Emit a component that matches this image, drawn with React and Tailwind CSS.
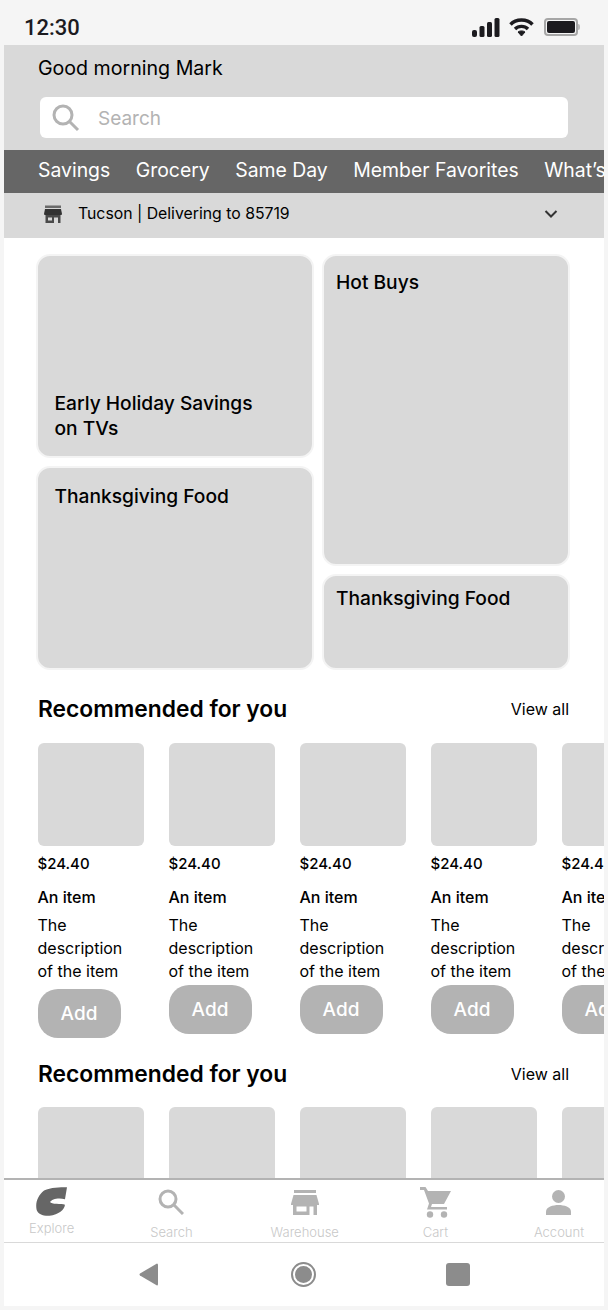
const font = "font-['Inter','Liberation_Sans',sans-serif]";

function StatusBar() {
  return (
    <div className="h-[45px] flex items-center justify-between pl-6 pr-7 pt-[9px] bg-[#f5f5f5]">
      <span className="text-[22px] font-medium text-[#1c1b1f] font-['Roboto',sans-serif]">12:30</span>
      <div className="flex items-center">
        <svg width="28" height="19" viewBox="0 0 28 19" fill="#1c1b1f">
          <rect x="0" y="12" width="5" height="7" rx="2" />
          <rect x="7.5" y="8" width="5" height="11" rx="1.5" />
          <rect x="15" y="4" width="5" height="15" rx="1.5" />
          <rect x="22.5" y="0" width="5" height="19" rx="1.5" />
        </svg>
        <svg className="ml-[9px]" width="25" height="19" viewBox="0 0 25 19" fill="none" stroke="#1c1b1f" strokeWidth="3.4">
          <path d="M1.5 6.5 C7 0.5 18 0.5 23.5 6.5" />
          <path d="M6 11 C9.5 7.5 15.5 7.5 19 11" />
          <path d="M9 14 L12.5 18 L16 14 C14 12.5 11 12.5 9 14Z" fill="#1c1b1f" strokeWidth="1" />
        </svg>
        <div className="flex items-center ml-[10px]">
          <div className="w-[34px] h-[18px] rounded-[4px] border-[2px] border-[#a6a6a6] p-[1px]">
            <div className="w-full h-full rounded-[2px] bg-[#1c1b1f]" />
          </div>
          <div className="w-[2px] h-[6px] bg-[#bbb] rounded-r" />
        </div>
      </div>
    </div>
  );
}

function Header() {
  const tabs = ["Savings", "Grocery", "Same Day", "Member Favorites", "What’s New"];
  return (
    <div>
      <div className="h-[105px] bg-[#d9d9d9] pt-[12px] pl-[34px]">
        <div className="text-[19.6px] leading-[23px] text-black">Good morning Mark</div>
        <div className="mt-[17px] ml-[2px] w-[528px] h-[41px] rounded-[6px] bg-white flex items-center pl-[11px]">
          <svg width="30" height="30" viewBox="0 0 30 30" fill="none" stroke="#b3b3b3" strokeWidth="3">
            <circle cx="12" cy="12" r="9" />
            <path d="M18.5 18.5 L27 27" />
          </svg>
          <span className="ml-[17px] pt-[3px] text-[19px] text-[#b3b3b3]">Search</span>
        </div>
      </div>
      <div className="h-[43px] bg-[#666666] flex items-center gap-[25.5px] pl-[34px] pb-[1px] overflow-hidden whitespace-nowrap">
        {tabs.map((t) => (
          <span key={t} className="text-[19.4px] text-white">{t}</span>
        ))}
      </div>
      <div className="h-[45px] bg-[#d9d9d9] flex items-center pl-[40px] pr-[46px] pb-[3px]">
        <svg width="18" height="18" viewBox="0 0 18 18" fill="#4a4a4a">
          <rect x="1" y="0.5" width="16" height="2.5" fill="#6b6b6b" />
          <path d="M1 4 H17 L18 9 Q18 10 17 10 H1 Q0 10 0 9 Z" fill="#333" />
          <path d="M1.5 10 H16.5 V18 H14 V12.5 H10 V18 H1.5 Z M4 12.5 V15.5 H8 V12.5 Z" fillRule="evenodd" />
        </svg>
        <span className="ml-[16px] text-[15.8px] text-black">Tucson | Delivering to 85719</span>
        <svg className="ml-auto" width="14" height="10" viewBox="0 0 14 10" fill="none" stroke="#333" strokeWidth="2">
          <path d="M1.5 2 L7 7.5 L12.5 2" />
        </svg>
      </div>
    </div>
  );
}

function Tile({ title, className }) {
  return (
    <div className={`rounded-[14px] bg-[#d9d9d9] border-[2px] border-[#f4f4f4] flex ${className}`}>
      <div className="text-[19.2px] leading-[25px] font-medium text-black">{title}</div>
    </div>
  );
}

function Product({ first }) {
  return (
    <div className="w-[106px] shrink-0">
      <div className="w-[106px] h-[103px] rounded-[6px] bg-[#d9d9d9]" />
      <div className="mt-[8px] text-[15px] leading-[20px] font-medium text-black">$24.40</div>
      <div className="mt-[13px] text-[16px] leading-[20px] font-medium text-black">An item</div>
      <div className="mt-[7px] w-[100px] text-[16px] leading-[23px] text-black">The description of the item</div>
      <div className={`${first ? "mt-[6px]" : "mt-[2px]"} w-[83px] h-[49px] pt-[1px] rounded-[20px] bg-[#b3b3b3] flex items-center justify-center text-[19px] font-medium text-white`}>
        Add
      </div>
    </div>
  );
}

function SectionTitle() {
  return (
    <div className="flex items-center justify-between pr-[35px]">
      <div className="text-[22.8px] leading-[28px] font-semibold text-black">Recommended for you</div>
      <div className="text-[16px] text-black">View all</div>
    </div>
  );
}

function BottomNav() {
  const items = [
    {
      label: "Search",
      gap: "ml-[76px]",
      icon: (
        <svg width="26" height="26" viewBox="0 0 26 26" fill="none" stroke="#b3b3b3" strokeWidth="3">
          <circle cx="10" cy="10" r="8" />
          <path d="M15.5 15.5 L25 25" />
        </svg>
      ),
    },
    {
      label: "Warehouse",
      gap: "ml-[78px]",
      icon: (
        <svg width="28" height="25" viewBox="0 0 28 25" fill="#b3b3b3">
          <rect x="3" y="0" width="22" height="3" />
          <path d="M2.5 5 H25.5 L28 14 V15 H0 V14 Z" />
          <path d="M2 15 H26 V25 H22.5 V16.5 H18.5 V25 H2 Z M5.5 16.5 V21.5 H15.5 V16.5 Z" fillRule="evenodd" />
        </svg>
      ),
    },
    {
      label: "Cart",
      gap: "ml-[81px]",
      icon: (
        <svg width="31" height="31" viewBox="0 0 31 31" fill="#b3b3b3">
          <path d="M0 0 H5.5 L8 4 H31 L24 17 H12 L11 20 H27 V22.5 H7 L9 16.5 L4 3 H0 Z" />
          <circle cx="10" cy="27.5" r="3.2" />
          <circle cx="24" cy="27.5" r="3.2" />
        </svg>
      ),
    },
    {
      label: "Account",
      gap: "ml-[83px]",
      icon: (
        <svg width="25" height="25" viewBox="0 0 25 25" fill="#b3b3b3">
          <circle cx="12.5" cy="6.5" r="6.5" />
          <path d="M0 25 V21.5 C0 17 7 15 12.5 15 C18 15 25 17 25 21.5 V25 Z" />
        </svg>
      ),
    },
  ];
  return (
    <div className="shrink-0 bg-white">
      <div className="h-[65px] border-t-[2px] border-[#b3b3b3] border-b border-b-[#d9d9d9] flex items-start pl-[25px]">
        <div className="flex flex-col items-center pt-[7px]">
          <svg width="31" height="29" viewBox="0 0 92 85" fill="#666666">
            <path d="M92 0 L86 36 C66 30 46 36 42 44 C44 52 76 48 86 52 C84 68 68 80 40 85 C20 86 6 80 2 68 C-3 46 6 24 24 10 C44 0 70 0 92 0Z" />
          </svg>
          <span className="mt-[4px] text-[13px] leading-[16px] font-light text-[#c8c8c8]">Explore</span>
        </div>
        {items.map((it) => (
          <div key={it.label} className={`${it.gap} flex flex-col items-center pt-[5px]`}>
            <div className="h-[34px] flex items-center">{it.icon}</div>
            <span className="mt-[5px] text-[13px] leading-[16px] font-light text-[#c8c8c8]">{it.label}</span>
          </div>
        ))}
      </div>
      <div className="h-[63px] flex items-center gap-[133px] pl-[135px]">
        <svg width="19" height="23" viewBox="0 0 19 23" fill="#8c8c8c">
          <path d="M18 0.5 Q19 0.5 19 2 V21 Q19 22.5 18 22.5 L1 12.5 Q0 11.5 1 10.5 Z" />
        </svg>
        <div className="w-[25px] h-[25px] rounded-full border-[2px] border-[#8c8c8c] p-[2px]">
          <div className="w-full h-full rounded-full bg-[#8c8c8c]" />
        </div>
        <div className="w-[24px] h-[23px] rounded-[3px] bg-[#8c8c8c] -ml-[3px]" />
      </div>
    </div>
  );
}

export default function App() {
  return (
    <div className={`w-[608px] h-[1310px] bg-[#f5f5f5] flex flex-col overflow-hidden ${font}`}>
      <StatusBar />
      <div className="mx-[4px] flex-1 min-h-0 bg-white flex flex-col mb-[4px] overflow-hidden">
        <Header />
        <div className="flex-1 min-h-0 overflow-hidden pl-[34px]">
          <div className="flex gap-[8px] mt-[16px] -ml-[2px]">
            <div className="w-[278px] flex flex-col gap-[8px]">
              <Tile title={<>Early Holiday Savings<br />on TVs</>} className="h-[204px] items-end px-[16.5px] pb-[15px]" />
              <Tile title="Thanksgiving Food" className="h-[204px] items-start px-[16.5px] pt-[16px]" />
            </div>
            <div className="w-[248px] flex flex-col gap-[8px]">
              <Tile title="Hot Buys" className="h-[312px] items-start px-[12px] pt-[14px]" />
              <Tile title="Thanksgiving Food" className="h-[96px] items-start px-[12px] pt-[10px]" />
            </div>
          </div>
          <div className="mt-[25px]"><SectionTitle /></div>
          <div className="mt-[20px] -ml-[0.5px] flex gap-[25px]">
            <Product first />
            <Product />
            <Product />
            <Product />
            <Product />
          </div>
          <div className="mt-[22px]"><SectionTitle /></div>
          <div className="mt-[19px] -ml-[0.5px] flex gap-[25px]">
            {[0, 1, 2, 3, 4].map((i) => (
              <div key={i} className="w-[106px] h-[103px] shrink-0 rounded-[6px] bg-[#d9d9d9]" />
            ))}
          </div>
        </div>
        <BottomNav />
      </div>
    </div>
  );
}
